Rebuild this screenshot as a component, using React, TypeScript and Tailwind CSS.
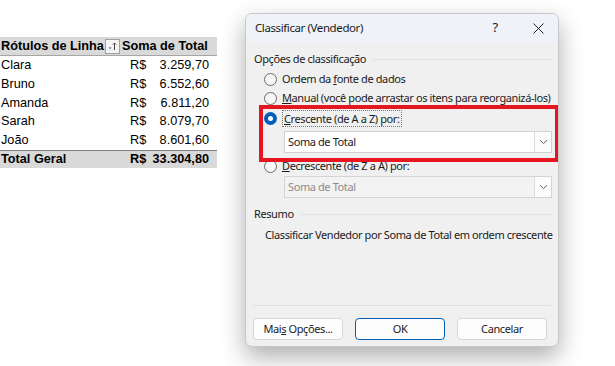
import React from "react";

const rows = [
  { name: "Clara", value: "3.259,70" },
  { name: "Bruno", value: "6.552,60" },
  { name: "Amanda", value: "6.811,20" },
  { name: "Sarah", value: "8.079,70" },
  { name: "João", value: "8.601,60" },
];

const sheetFont = { fontFamily: '"Liberation Sans", Arial, sans-serif' };
const uiFont = { fontFamily: '"Noto Sans", "Open Sans", sans-serif' };

function Radio({ checked = false }: { checked?: boolean }) {
  return checked ? (
    <span className="flex h-[13px] w-[13px] shrink-0 items-center justify-center rounded-full bg-[#005fb8]">
      <span className="h-[5px] w-[5px] rounded-full bg-white" />
    </span>
  ) : (
    <span className="h-[13px] w-[13px] shrink-0 rounded-full border border-[#6b6b6b] bg-[#f7f7f7]" />
  );
}

function Chevron() {
  return (
    <svg width="9" height="6" viewBox="0 0 9 6" fill="none">
      <path d="M1 1.2 4.5 4.6 8 1.2" stroke="#606060" strokeWidth="1" />
    </svg>
  );
}

function Select({ disabled = false }: { disabled?: boolean }) {
  return (
    <div
      className={`ml-[38px] mr-[6px] flex h-[22px] items-stretch border ${
        disabled ? "border-[#d4d4d4] bg-[#f3f3f3]" : "border-[#d0d0d0] bg-white"
      }`}
    >
      <span
        className={`flex flex-1 items-center pl-[3px] ${
          disabled ? "text-[#8c8c8c]" : "text-[#1b1b1b]"
        }`}
      >
        Soma de Total
      </span>
      <span className="flex w-[17px] items-center justify-center border-l border-[#dcdcdc] bg-[#fcfcfc]">
        <Chevron />
      </span>
    </div>
  );
}

function GroupTitle({ children }: { children: React.ReactNode }) {
  return (
    <div className="flex h-[16px] items-center gap-[6px] pl-[8px] pr-[6px] text-[#1b1b1b]">
      <span>{children}</span>
      <span className="h-px flex-1 bg-[#e2e2e2]" />
    </div>
  );
}

function Button({
  children,
  primary = false,
}: {
  children: React.ReactNode;
  primary?: boolean;
}) {
  return (
    <button
      className={`h-[22px] w-[90px] rounded-[4px] bg-[#fdfdfd] text-[#1b1b1b] ${
        primary ? "border border-[#005fb8]" : "border border-[#d5d5d5]"
      }`}
    >
      {children}
    </button>
  );
}

function PivotTable() {
  return (
    <div
      className="mt-[37px] w-[217px] whitespace-nowrap text-[12.7px] leading-none text-black"
      style={sheetFont}
    >
      {/* header */}
      <div className="flex h-[19px] items-center border-b border-[#a6a6a6] bg-[#d9d9d9] font-bold">
        <div className="flex w-[122px] items-center pl-[1px]">
          <span>Rótulos de Linha</span>
          <span className="ml-auto mr-[2px] flex h-[15px] w-[15px] items-center justify-center border border-[#a0a0a0] bg-[#f4f4f4]">
            <svg width="11" height="11" viewBox="0 0 11 11" fill="none">
              <path d="M1.5 6.5h3L3 8z" fill="#444" />
              <path d="M7.5 2v7M6 3.5 7.5 2 9 3.5" stroke="#444" strokeWidth="1" />
            </svg>
          </span>
        </div>
        <span>Soma de Total</span>
      </div>
      {rows.map((r) => (
        <div key={r.name} className="flex h-[18.8px] items-center">
          <div className="w-[130px] pl-[1px]">{r.name}</div>
          <span>R$</span>
          <span className="ml-auto pr-[8px]">{r.value}</span>
        </div>
      ))}
      <div className="flex h-[18px] items-center border-t border-[#808080] bg-[#d9d9d9] font-bold">
        <div className="w-[130px] pl-[1px]">Total Geral</div>
        <span>R$</span>
        <span className="ml-auto pr-[8px]">33.304,80</span>
      </div>
    </div>
  );
}

function SortDialog() {
  return (
    <div
      className="absolute left-[245px] top-[13px] flex h-[334px] w-[314px] flex-col overflow-hidden rounded-[7px] border border-[#c8c8c8] bg-[#f0f0f0] text-[11px] tracking-[-0.4px] shadow-[0_10px_24px_rgba(0,0,0,0.32)]"
      style={uiFont}
    >
      {/* title */}
      <div className="flex h-[28px] shrink-0 items-center bg-[#eff2f9] pl-[9px] text-[11.5px] text-[#1b1b1b]">
        <span className="flex-1">Classificar (Vendedor)</span>
        <span className="w-[20px] text-center text-[13px]">?</span>
        <span className="ml-[26px] mr-[13px] flex w-[14px] justify-center">
          <svg width="11" height="11" viewBox="0 0 11 11">
            <path d="M.5.5l10 10M10.5.5l-10 10" stroke="#222" strokeWidth="1" />
          </svg>
        </span>
      </div>

      <div className="mt-[9px]">
        <GroupTitle>Opções de classificação</GroupTitle>
      </div>

      <div className="mt-[4px] flex h-[16px] items-center gap-[5px] whitespace-nowrap pl-[18px] text-[#1b1b1b]">
        <Radio />
        <span>
          Ordem da <u>f</u>onte de dados
        </span>
      </div>
      <div className="mt-[3px] flex h-[16px] items-center gap-[5px] whitespace-nowrap pl-[18px] text-[#1b1b1b]">
        <Radio />
        <span>
          <u>M</u>anual (você pode arrastar os itens para reorganizá-los)
        </span>
      </div>
      <div className="mt-[4px] flex h-[16px] items-center gap-[5px] whitespace-nowrap pl-[18px] text-[#1b1b1b]">
        <Radio checked />
        <span className="border border-dotted border-[#777] px-[1px] leading-[15px]">
          <u>C</u>rescente (de A a Z) por:
        </span>
      </div>
      <div className="mt-[5px]">
        <Select />
      </div>
      <div className="mt-[5px] flex h-[16px] items-center gap-[5px] whitespace-nowrap pl-[18px] text-[#1b1b1b]">
        <Radio />
        <span>
          <u>D</u>ecrescente (de Z a A) por:
        </span>
      </div>
      <div className="mt-[2px]">
        <Select disabled />
      </div>

      <div className="mt-[8px]">
        <GroupTitle>Resumo</GroupTitle>
      </div>
      <div className="mt-[5px] whitespace-nowrap pl-[19px] leading-[16px] text-[#1b1b1b]">
        Classificar Vendedor por Soma de Total em ordem crescente
      </div>

      <div className="mx-[7px] mt-auto h-px bg-[#e0e0e0]" />
      <div className="mb-[6px] mt-[12px] flex gap-[12px] pl-[7px]">
        <Button>
          Mai<u>s</u> Opções...
        </Button>
        <Button primary>OK</Button>
        <Button>Cancelar</Button>
      </div>

      {/* annotation */}
      <div className="pointer-events-none absolute left-[13px] top-[91px] h-[57px] w-[300px] border-[4px] border-[#e5161f]" />
    </div>
  );
}

export default function App() {
  return (
    <div className="relative h-[366px] w-[615px] overflow-hidden bg-white">
      <PivotTable />
      <SortDialog />
    </div>
  );
}
